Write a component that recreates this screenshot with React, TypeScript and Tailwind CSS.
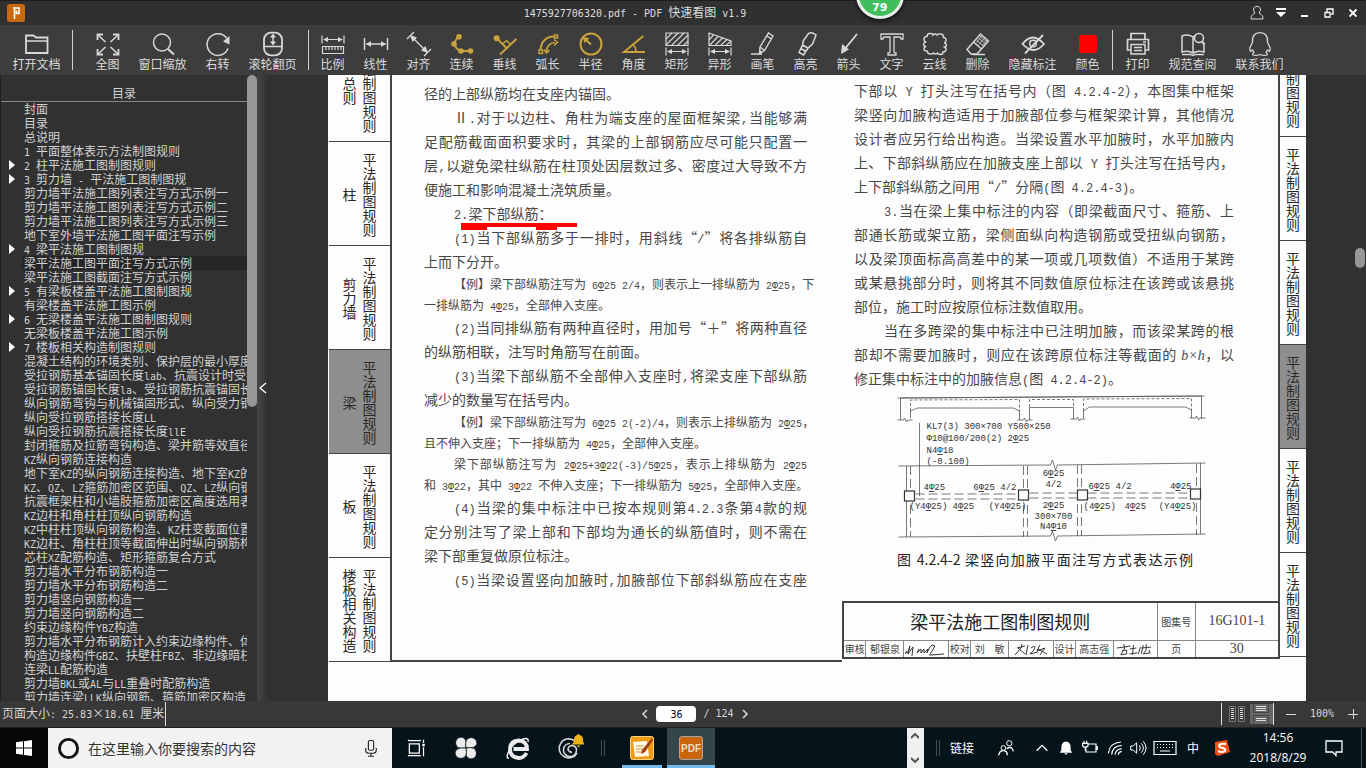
import React, { Fragment, ReactNode } from "react";

const UI = "font-['Noto_Sans_CJK_SC',sans-serif]";

/* Half-width runs are set in a fixed-width face so they take half a Chinese character each. */
function Mixed({ text }: { text: string }) {
  const parts = text.split(/([\x20-\x7e]+)/);
  return (
    <>
      {parts.map((p, i) =>
        i % 2 === 1 ? (
          <span key={i} className="font-['DejaVu_Sans_Mono',monospace] text-[10px]">
            {p}
          </span>
        ) : (
          <Fragment key={i}>{p}</Fragment>
        ),
      )}
    </>
  );
}

function Ico({ children, className = "size-6" }: { children: ReactNode; className?: string }) {
  return (
    <svg viewBox="0 0 24 24" className={`${className} shrink-0 overflow-visible`} fill="none" stroke="currentColor" strokeWidth="1.5" aria-hidden="true">
      {children}
    </svg>
  );
}

type Tool = { label: string; icon: ReactNode; wide?: boolean; gold?: boolean };

const openTool: Tool = {
  label: "打开文档",
  wide: true,
  icon: (
    <>
      <path d="M1 21V3.5h7.5l2.5 2h11.5V21z" strokeWidth="1.8" />
      <path d="M1 9h22" />
    </>
  ),
};

const viewTools: Tool[] = [
  {
    label: "全图",
    icon: (
      <>
        <path d="M1.500 8V2.500H7M22.500 8V2.500H17M1.500 17v5.500H7M22.500 17v5.500H17" strokeWidth="1.8" />
        <path d="M2 3l7.500 7M22 3l-7.500 7M2 22l7.500-7M22 22l-7.500-7" strokeWidth="1.6" />
      </>
    ),
  },
  {
    label: "窗口缩放",
    wide: true,
    icon: (
      <>
        <circle cx="11" cy="10.500" r="8.500" />
        <path d="M17 17l6 5.500" strokeWidth="2" />
      </>
    ),
  },
  {
    label: "右转",
    icon: (
      <>
        <path d="M22 16.500A10.800 10.800 0 1 1 20.500 6" />
        <path d="M23.500 4v8.500l-6.500-3z" fill="currentColor" stroke="none" />
      </>
    ),
  },
  {
    label: "滚轮翻页",
    wide: true,
    icon: (
      <>
        <rect x="3" y="0.700" width="18" height="22.600" rx="7" strokeWidth="1.800" />
        <path d="M3 14.500h18M12 4v7" />
        <path d="M12 1.500l3 4H9zM12 13.500l3-4H9z" fill="currentColor" stroke="none" />
      </>
    ),
  },
];

const dimension = (y: number) => (
  <>
    <path d={`M1 ${y - 4}v8M23 ${y - 4}v8M3 ${y}h18`} strokeWidth="1.2" />
    <path d={`M2 ${y}l5-2.500v5zM22 ${y}l-5-2.500v5z`} fill="currentColor" stroke="none" />
  </>
);

const markTools: Tool[] = [
  {
    label: "比例",
    icon: (
      <>
        {dimension(7.5)}
        <path d="M1.500 14.500h21v7h-21zM5 15v3M8 15v3M11 15v3M14 15v3M17 15v3M20 15v3" strokeWidth="1.200" />
      </>
    ),
  },
  {
    label: "线性",
    icon: (
      <>
        <path d="M0.500 6v12M23.500 6v12M3 12h18" />
        <path d="M1.500 12l5.500-2.800v5.600zM22.500 12l-5.500-2.800v5.600z" fill="currentColor" stroke="none" />
      </>
    ),
  },
  {
    label: "对齐",
    icon: (
      <>
        <path d="M0 7L7 0M17 24l7-7M4 4l16 16" strokeWidth="1.300" />
        <path d="M3 3l7 2.500-4.500 4.500zM21 21l-7-2.500 4.500-4.500z" fill="currentColor" stroke="none" />
      </>
    ),
  },
  {
    label: "连续",
    gold: true,
    icon: (
      <>
        <path d="M9 4.700Q4 9 4.500 12Q6 18 11 19h9.500" strokeWidth="2" />
        <g fill="currentColor" stroke="none">
          <circle cx="9" cy="4.700" r="2.800" />
          <circle cx="4" cy="12" r="2.800" />
          <circle cx="11" cy="19" r="2.800" />
          <circle cx="20.500" cy="19" r="2.800" />
        </g>
      </>
    ),
  },
  {
    label: "垂线",
    gold: true,
    icon: (
      <>
        <circle cx="3.700" cy="6.300" r="3" fill="currentColor" stroke="none" />
        <path d="M4 6.500l9.500 9.500M7 22.500L23.500 7" strokeWidth="2" />
        <path d="M9.500 12l4-3.500 4 4" />
      </>
    ),
  },
  {
    label: "弧长",
    gold: true,
    icon: (
      <>
        <path d="M18 4.500C10 4.500 4.700 10 4.700 18" strokeWidth="2" />
        <path d="M18.500 3h3v3h-3zM3 18h3.500v3.500H3z" />
        <path d="M19 10.500c-5 0-8.500 4-8.500 9M18 7.500l3.500 3-3.500 3M8 17.500l2.500 3.500 3-3" />
      </>
    ),
  },
  {
    label: "半径",
    gold: true,
    icon: (
      <>
        <circle cx="12" cy="12" r="10.500" strokeWidth="2" />
        <path d="M12 12.500L5.500 6.500" strokeWidth="2" />
        <path d="M3.500 5l7 1-5 5z" fill="currentColor" stroke="none" />
      </>
    ),
  },
  {
    label: "角度",
    gold: true,
    icon: (
      <>
        <path d="M21.300 4L2 20h21" strokeWidth="2" />
        <path d="M11 12.500q3.500 3 2.500 7.500" />
      </>
    ),
  },
  {
    label: "矩形",
    icon: (
      <>
        <path d="M1 1h22v12.500H1z" strokeWidth="1.2" />
        <path d="M1 7l6-6M1 13l12-12M6.500 13.500L19 1M12.500 13.500L23 3M18.500 13.500L23 9" strokeWidth="1.200" />
        {dimension(19.5)}
      </>
    ),
  },
  {
    label: "异形",
    icon: (
      <>
        <path d="M1 1l22 8v4.500H1z" strokeWidth="1.2" />
        <path d="M1 8l4.500-5M2 13l8-8.500M7.500 13l7-7M13 13l6-5.500M18.500 13l4-3.500" strokeWidth="1.200" />
        {dimension(19.5)}
      </>
    ),
  },
  {
    label: "画笔",
    icon: (
      <>
        <path d="M9 15L17.500 1l4.500 3-8.500 14.500-5 3zM16 4l4.500 3M9 15l4.500 3.500M0 22h11" strokeWidth="1.400" />
        <path d="M8.500 22v-4l3 2z" fill="currentColor" stroke="none" />
      </>
    ),
  },
  {
    label: "高亮",
    icon: (
      <path d="M9.500 8.500L14.500 1.500q3-2 7.500 1.500l-3.500 9-4.500 4-5.500-3zM8.500 13l-3.500 7.500 4.500 2.500 4.500-7M9.500 8.500l-1 4.500M7 16.500l5 3" strokeWidth="1.500" />
    ),
  },
  {
    label: "箭头",
    icon: (
      <>
        <path d="M20 2L7 18" strokeWidth="1.800" />
        <path d="M4 22l1-10 7 5.500z" fill="currentColor" stroke="none" />
      </>
    ),
  },
  {
    label: "文字",
    icon: <path d="M1 2h22v5h-2q0-2-2-2h-5v15q0 1 2 1v2H8v-2q2 0 2-1V5H5Q3 5 3 7H1z" strokeWidth="1.300" />,
  },
  {
    label: "云线",
    icon: (
      <path
        d="M4 4.500q0-3 3-3t3 1.500q2-2 4 0 1-1.500 4-1t2.500 3.500q3 .5 2.500 3t-2 2q2.500 1 2.500 2.500t-2 2q2 1 1.500 3t-3 2q0 2.500-2.500 2.500t-3-1.500q-2 2-4 0-1 1.500-3.500 1T4 19q-3 0-3-2t2-2.500q-2.500-.5-2.500-2t2-2.500Q.5 9 1 6.500t3-2z"
        strokeWidth="1.400"
      />
    ),
  },
  {
    label: "删除",
    icon: (
      <>
        <path d="M14.500 2l8 7L11 22H5l-4-4.500zM7.500 10l8 7M6 22.500h13" />
        <path d="M10.500 8l7.500 6.500M12.500 6l7.500 6M14 4l7 6M13 12.500l6-7M10.500 10.500l5.500-7M16 14l5-6" strokeWidth="0.8" />
      </>
    ),
  },
  {
    label: "隐藏标注",
    wide: true,
    icon: (
      <>
        <path d="M1.500 12q10-13 21.500 0-10 12-21.500 0z" strokeWidth="1.800" />
        <circle cx="12" cy="11.500" r="3.300" />
        <path d="M4 21.500L22 3" strokeWidth="1.800" />
      </>
    ),
  },
  { label: "颜色", icon: <rect x="3" y="3" width="18" height="18" rx="2" fill="#ff0000" stroke="none" /> },
];

const endTools: Tool[] = [
  {
    label: "打印",
    icon: (
      <>
        <path d="M5 7V1.500h14V7M5 18H1.500V7.500h21V18H19" strokeWidth="1.700" />
        <path d="M5 12.500h14v9.500H5zM8 15.500h8M8 18.500h8M17 10h3" />
      </>
    ),
  },
  {
    label: "规范查阅",
    wide: true,
    icon: (
      <>
        <path d="M12 5Q7 1.500 1 4v16q6-2 11 1 5-3 11-1V11M12 5v16M12 5q1-1 3-1.500M1 22.500h9l2 1 2-1h9" />
        <circle cx="18" cy="6" r="4.500" />
        <path d="M21 9.500l2.500 3" strokeWidth="2" />
      </>
    ),
  },
  {
    label: "联系我们",
    wide: true,
    icon: (
      <path d="M12 .7c-5 0-8 3-7.500 9.500L2 15.500q-.7 3 .5 4l2-1.500 1.500 2.500q-2 1.500-1 2.500 3 1 7-.5 4 1.500 7 .5 1-1-1-2.500l1.500-2.500 2 1.500q1.200-1 .5-4l-2.500-5.300C20 3.700 17 .7 12 .7z" strokeWidth="1.300" />
    ),
  },
];

function ToolButton({ tool }: { tool: Tool }) {
  return (
    <button type="button" className={`flex shrink-0 flex-col items-center ${tool.wide ? "w-[67px]" : "w-[43px]"}`}>
      <span className={tool.gold ? "text-[#c9a13d]" : "text-[#d8d8d8]"}>
        <Ico>{tool.icon}</Ico>
      </span>
      <span className="text-xs leading-4 whitespace-nowrap text-[#dadada]">{tool.label}</span>
    </button>
  );
}

const Sep = ({ className }: { className: string }) => <div className={`h-10 w-px shrink-0 bg-[#d0d0d0] ${className}`} />;

const outline: { t: string; open?: boolean; sel?: boolean }[] = [
  { t: "封面" },
  { t: "目录" },
  { t: "总说明" },
  { t: "1 平面整体表示方法制图规则" },
  { t: "2 柱平法施工图制图规则", open: true },
  { t: "3 剪力墙 - 平法施工图制图规", open: true },
  { t: "剪力墙平法施工图列表注写方式示例一" },
  { t: "剪力墙平法施工图列表注写方式示例二" },
  { t: "剪力墙平法施工图列表注写方式示例三" },
  { t: "地下室外墙平法施工图平面注写示例" },
  { t: "4 梁平法施工图制图规", open: true },
  { t: "梁平法施工图平面注写方式示例", sel: true },
  { t: "梁平法施工图截面注写方式示例" },
  { t: "5 有梁板楼盖平法施工图制图规", open: true },
  { t: "有梁楼盖平法施工图示例" },
  { t: "6 无梁楼盖平法施工图制图规则", open: true },
  { t: "无梁板楼盖平法施工图示例" },
  { t: "7 楼板相关构造制图规则", open: true },
  { t: "混凝土结构的环境类别、保护层的最小厚度" },
  { t: "受拉钢筋基本锚固长度lab、抗震设计时受拉" },
  { t: "受拉钢筋锚固长度la、受拉钢筋抗震锚固长度" },
  { t: "纵向钢筋弯钩与机械锚固形式、纵向受力钢筋" },
  { t: "纵向受拉钢筋搭接长度LL" },
  { t: "纵向受拉钢筋抗震搭接长度llE" },
  { t: "封闭箍筋及拉筋弯钩构造、梁并筋等效直径" },
  { t: "KZ纵向钢筋连接构造" },
  { t: "地下室KZ的纵向钢筋连接构造、地下室KZ的" },
  { t: "KZ、QZ、LZ箍筋加密区范围、QZ、LZ纵向钢筋" },
  { t: "抗震框架柱和小墙肢箍筋加密区高度选用表" },
  { t: "KZ边柱和角柱柱顶纵向钢筋构造" },
  { t: "KZ中柱柱顶纵向钢筋构造、KZ柱变截面位置" },
  { t: "KZ边柱、角柱柱顶等截面伸出时纵向钢筋构造" },
  { t: "芯柱XZ配筋构造、矩形箍筋复合方式" },
  { t: "剪力墙水平分布钢筋构造一" },
  { t: "剪力墙水平分布钢筋构造二" },
  { t: "剪力墙竖向钢筋构造一" },
  { t: "剪力墙竖向钢筋构造二" },
  { t: "约束边缘构件YBZ构造" },
  { t: "剪力墙水平分布钢筋计入约束边缘构件、体积" },
  { t: "构造边缘构件GBZ、扶壁柱FBZ、非边缘暗柱" },
  { t: "连梁LL配筋构造" },
  { t: "剪力墙BKL或AL与LL重叠时配筋构造" },
  { t: "剪力墙连梁LLK纵向钢筋、箍筋加密区构造" },
];

type LineProps = { text: string; indent?: boolean; small?: boolean; full?: boolean; children?: ReactNode };

/* One set line of the sheet. "Ф" stands for the ribbed-bar mark and is drawn on a short bar. */
function Line({ text, children, indent, small, full }: LineProps) {
  const parts = text.split(/(Ф| b×h|[\x20-\x7e]+)/);
  return (
    <div
      className={`relative whitespace-nowrap ${indent ? "pl-[30px]" : ""} ${small ? "h-[21px] text-xs leading-[21px]" : "h-6 text-sm leading-6"} ${full ? "text-justify [text-align-last:justify]" : ""}`}
    >
      {parts.map((p, i) => {
        if (i % 2 === 0) return <Fragment key={i}>{p}</Fragment>;
        if (p === " b×h") return <i key={i} className="font-['Liberation_Serif',serif] leading-none">{p}</i>;
        const face = small
          ? "font-['Liberation_Mono',monospace] text-[10px] leading-none"
          : "font-['Liberation_Mono',monospace] text-xs leading-none";
        if (p === "Ф")
          return (
            <span key={i} className={`${face} underline underline-offset-1`}>
              Φ
            </span>
          );
        return (
          <span key={i} className={face}>
            {p}
          </span>
        );
      })}
      {children}
    </div>
  );
}

const tabs = ["总则", "柱", "剪力墙", "梁", "板", "楼板相关构造"];

function ChapterTab({ name, active }: { name?: string; active: boolean }) {
  return (
    <div
      className={`flex h-[104px] shrink-0 items-center justify-center gap-[6px] border-b border-[#444] pt-[2px] text-sm leading-[14px] text-[#2a2a2a] ${active ? "bg-[#8e8e8e]" : ""}`}
    >
      {name && <span className="whitespace-nowrap [writing-mode:vertical-rl]">{name}</span>}
      <span className="whitespace-nowrap [writing-mode:vertical-rl]">平法制图规则</span>
    </div>
  );
}

function Bar({ x, y, children, anchor = "start" }: { x: number; y: number; children: ReactNode; anchor?: "start" | "middle" | "end" }) {
  return (
    <text x={x} y={y} textAnchor={anchor} stroke="none" fill="#333">
      {children}
    </text>
  );
}
const r = <tspan textDecoration="underline">Φ</tspan>;

function Figure() {
  return (
    <svg
      viewBox="842 391 435 158"
      className="h-[158px] w-full shrink-0 font-['Liberation_Mono','Noto_Sans_CJK_SC',monospace] text-[9px]"
      fill="none"
      stroke="#555"
      strokeWidth="0.8"
      role="img"
      aria-label="梁竖向加腋平面注写方式表达示例"
    >
      <path d="M900 420V398L1201 396V419" />
      <path d="M897 398L1204 396" />
      <path d="M910 418V411L917 408H1013L1019 411V420M1029 420V407.500H1073V419M1083 418V411L1089 407H1185L1191 410V418" />
      <path d="M910 411V400L1019 399.500V411M1029 407V399.500H1073V407M1083 411V399L1191 398.500V410" strokeDasharray="3 2" />
      <path d="M897 420h6l1-2 2 4 1-2h5M1017 420h6l1-2 2 4 1-2h5M1070 419h6l1-2 2 4 1-2h5M1189 418h6l1-2 2 4 1-2h6" />
      <path d="M919 423v73" />
      <path d="M898 466L1050 465l2-5 3 10 2-5L1205 463M898 537L1050 536l2-5 3 10 2-5L1205 534" />
      <path d="M906 466v71M1200 463v71" />
      <path d="M910 466v71M1023 466v71M1027 466v71M1077 465v71M1081 465v71M1196 464v71" strokeDasharray="9 4" />
      <path d="M915 494H1018M915 499H1018M1029 493H1077M1029 498H1077M1087 493H1190M1087 498H1190" strokeDasharray="9 4" />
      <g fill="#fdfdfd" stroke="#333" strokeWidth="1.200">
        <rect x="904" y="491" width="10" height="10" />
        <rect x="1018" y="490" width="10" height="10" />
        <rect x="1077" y="490" width="10" height="10" />
        <rect x="1190" y="489" width="10" height="10" />
      </g>
      <Bar x={926} y={429}>KL7(3) 300×700 Y500×250</Bar>
      <Bar x={926} y={441}>Φ10@100/200(2) 2{r}25</Bar>
      <Bar x={926} y={453}>N4{r}18</Bar>
      <Bar x={926} y={464}>(-0.100)</Bar>
      <Bar x={923} y={490}>4{r}25</Bar>
      <Bar x={1016} y={490} anchor="end">6{r}25 4/2</Bar>
      <Bar x={909} y={509}>(Y4{r}25)</Bar>
      <Bar x={952} y={509}>4{r}25</Bar>
      <Bar x={1026} y={509} anchor="end">(Y4{r}25)</Bar>
      <Bar x={1053} y={476} anchor="middle">6{r}25</Bar>
      <Bar x={1053} y={487} anchor="middle">4/2</Bar>
      <Bar x={1053} y={508} anchor="middle">2{r}25</Bar>
      <Bar x={1053} y={519} anchor="middle">300×700</Bar>
      <Bar x={1053} y={529} anchor="middle">N4{r}10</Bar>
      <Bar x={1088} y={489}>6{r}25 4/2</Bar>
      <Bar x={1191} y={489} anchor="end">4{r}25</Bar>
      <Bar x={1083} y={509}>(4{r}25)</Bar>
      <Bar x={1124} y={509}>4{r}25</Bar>
      <Bar x={1196} y={509} anchor="end">(Y4{r}25)</Bar>
    </svg>
  );
}

const Sign = ({ d }: { d: string }) => (
  <svg viewBox="0 0 44 14" className="h-[14px] w-full overflow-visible" fill="none" stroke="#333" strokeWidth="1" aria-hidden="true">
    <path d={d} />
  </svg>
);

function TitleBlock() {
  return (
    <table className="mt-auto w-full shrink-0 table-fixed border-collapse border-t-2 border-l-2 border-[#444] text-[#444]">
      <colgroup>
        {[23, 38, 45, 22, 38, 45, 22, 38, 44, 38, 83].map((w, i) => (
          <col key={i} style={{ width: `${(w / 436) * 100}%` }} />
        ))}
      </colgroup>
      <tbody>
        <tr className="h-[38px]">
          <th colSpan={9} className="border border-[#888] border-t-[#444] border-l-[#444] p-0 text-lg leading-6 font-normal text-[#222]">
            梁平法施工图制图规则
          </th>
          <td className="border border-[#888] border-t-[#444] p-0 text-center text-[10px]">图集号</td>
          <td className="border border-[#888] border-t-[#444] border-r-0 p-0 text-center font-['Liberation_Serif',serif] text-sm">16G101-1</td>
        </tr>
        <tr className="h-[17px] text-center text-[10px] leading-[14px] whitespace-nowrap [&>td]:border-x [&>td]:border-[#888] [&>td]:p-0">
          <td>审核</td>
          <td>郁银泉</td>
          <td>
            <Sign d="M3 9q-4 4 1 1l2-6-2 8 5-7-1 9M15 7l-2 4 4-4v4l3-4v4l4-4-1 4 3-6 2-2 3 1-4 7q-3 3 0 2l13-1" />
          </td>
          <td>校对</td>
          <td>刘　敏</td>
          <td>
            <Sign d="M8 6l8-2M13 2l-1 4-6 7M9 6l7 6M19 3l-2 10M22 6q6-4 3 2l-4 4 8-2M31 3l-3 6 8-3-5 7M29 7l9 5" />
          </td>
          <td>设计</td>
          <td>高志强</td>
          <td>
            <Sign d="M3 6l14-2M10 2l1 4-4 7 6-1V8l-5 1M20 3l-1 10M16 7l7-1M16 12l8-1M27 5l-2 7M30 3l-2 9M28 6l10-1M33 2v6l-3 4 7-1-1-3" />
          </td>
          <td>页</td>
          <td className="border-r-0! font-['Liberation_Serif',serif] text-sm leading-[14px]">30</td>
        </tr>
      </tbody>
    </table>
  );
}

function PdfPage() {
  return (
    <article className="ml-[60px] flex min-w-0 flex-1 items-stretch overflow-hidden bg-[#fdfdfd] pb-[39px] pl-px">
      <div className="flex w-[61px] shrink-0 flex-col justify-end overflow-hidden">
        {tabs.map((t) => (
          <ChapterTab key={t} name={t} active={t === "梁"} />
        ))}
      </div>
      <div className="grid min-w-0 flex-1 grid-cols-[minmax(0,452fr)_minmax(0,438fr)]">
        <div className="flex flex-col border-b-2 border-l-2 border-[#444] pt-[6px] pr-[35px] pl-8 text-[#484848]">
          <Line text="径的上部纵筋均在支座内锚固。" />
          <Line indent full text="Ⅱ.对于以边柱、角柱为端支座的屋面框架梁,当能够满" />
          <Line full text="足配筋截面面积要求时，其梁的上部钢筋应尽可能只配置一" />
          <Line full text="层,以避免梁柱纵筋在柱顶处因层数过多、密度过大导致不方" />
          <Line text="便施工和影响混凝土浇筑质量。" />
          <Line indent text="2.梁下部纵筋：">
            <svg viewBox="0 0 116 7" className="absolute top-[22px] left-[37px] h-[7px] w-[116px]" fill="#ff0000" aria-hidden="true">
              <path d="M0 0h116v4H96v3H75V4H26v3H0z" />
            </svg>
          </Line>
          <Line indent full text="(1)当下部纵筋多于一排时，用斜线“/”将各排纵筋自" />
          <Line text="上而下分开。" />
          <Line indent small full text="【例】梁下部纵筋注写为 6Ф25 2/4，则表示上一排纵筋为 2Ф25，下" />
          <Line small text="一排纵筋为 4Ф25，全部伸入支座。" />
          <Line indent full text="(2)当同排纵筋有两种直径时，用加号“＋”将两种直径" />
          <Line text="的纵筋相联，注写时角筋写在前面。" />
          <Line indent full text="(3)当梁下部纵筋不全部伸入支座时,将梁支座下部纵筋" />
          <Line text="减少的数量写在括号内。" />
          <Line indent small full text="【例】梁下部纵筋注写为 6Ф25 2(-2)/4，则表示上排纵筋为 2Ф25，" />
          <Line small text="且不伸入支座；下一排纵筋为 4Ф25，全部伸入支座。" />
          <Line indent small full text="梁下部纵筋注写为 2Ф25+3Ф22(-3)/5Ф25，表示上排纵筋为 2Ф25" />
          <Line small full text="和 3Ф22，其中 3Ф22 不伸入支座；下一排纵筋为 5Ф25，全部伸入支座。" />
          <Line indent full text="(4)当梁的集中标注中已按本规则第4.2.3条第4款的规" />
          <Line full text="定分别注写了梁上部和下部均为通长的纵筋值时，则不需在" />
          <Line text="梁下部重复做原位标注。" />
          <Line indent full text="(5)当梁设置竖向加腋时,加腋部位下部斜纵筋应在支座" />
        </div>
        <div className="mb-[3px] flex flex-col border-r-2 border-b-2 border-[#444] pt-[3px]">
          <div className="pr-[44px] pb-px pl-3 text-[#484848]">
            <Line full text="下部以 Y 打头注写在括号内（图 4.2.4-2），本图集中框架" />
            <Line full text="梁竖向加腋构造适用于加腋部位参与框架梁计算，其他情况" />
            <Line full text="设计者应另行给出构造。当梁设置水平加腋时，水平加腋内" />
            <Line full text="上、下部斜纵筋应在加腋支座上部以 Y 打头注写在括号内，" />
            <Line text="上下部斜纵筋之间用“/”分隔(图 4.2.4-3)。" />
            <Line indent full text="3.当在梁上集中标注的内容（即梁截面尺寸、箍筋、上" />
            <Line full text="部通长筋或架立筋，梁侧面纵向构造钢筋或受扭纵向钢筋，" />
            <Line full text="以及梁顶面标高高差中的某一项或几项数值）不适用于某跨" />
            <Line full text="或某悬挑部分时，则将其不同数值原位标注在该跨或该悬挑" />
            <Line text="部位，施工时应按原位标注数值取用。" />
            <Line indent full text="当在多跨梁的集中标注中已注明加腋，而该梁某跨的根" />
            <Line full text="部却不需要加腋时，则应在该跨原位标注等截面的 b×h，以" />
            <Line text="修正集中标注中的加腋信息(图 4.2.4-2)。" />
          </div>
          <Figure />
          <p className="ml-[55px] w-[296px] text-justify text-sm leading-5 whitespace-nowrap text-[#222] [text-align-last:justify]">
            图 4.2.4-2 梁竖向加腋平面注写方式表达示例
          </p>
          <TitleBlock />
        </div>
      </div>
      <div className="mb-[5px] flex w-[26px] shrink-0 flex-col justify-end overflow-hidden">
        {tabs.map((t) => (
          <ChapterTab key={t} active={t === "梁"} />
        ))}
      </div>
    </article>
  );
}

function TitleBar() {
  return (
    <header className="relative flex h-[25px] shrink-0 items-center border-t border-[#1c1c1c] bg-[#303030] pr-px pl-[7px] text-[#ddd]">
      <div className="flex flex-1">
        <svg viewBox="0 0 18 18" className="size-[18px]" aria-hidden="true">
          <rect width="18" height="18" rx="3" fill="#c96a10" />
          <path d="M6 4h3M7.500 4v11M9 4h3v5.500H9.500v-3" fill="none" stroke="#fff" strokeWidth="1.600" />
        </svg>
      </div>
      <h1 className="mr-[102px] text-xs leading-4 font-normal whitespace-pre">
        <Mixed text="1475927706320.pdf - PDF 快速看图 v1.9" />
      </h1>
      <div className="flex flex-1 items-center justify-end">
        <button type="button" aria-label="用户" className="flex w-6 justify-center">
          <Ico className="size-4">
            <path d="M12 2c-4 0-6 3-5 6.500.5 1.500 1 2.500 2 3.500C4 15 3 17 3 21h18c0-4-1-6-6-9 1-1 1.500-2 2-3.500C18 5 16 2 12 2z" />
          </Ico>
        </button>
        <button type="button" aria-label="菜单" className="flex w-6 justify-center text-white">
          <svg viewBox="0 0 10 10" className="size-[10px]" fill="currentColor" aria-hidden="true">
            <path d="M0 0h10v2H0zM0 4h10L5 9z" />
          </svg>
        </button>
        <button type="button" aria-label="最小化" className="flex w-6 justify-center text-white">
          <svg viewBox="0 0 10 10" className="size-[10px]" fill="currentColor" aria-hidden="true">
            <path d="M1 7h7v2H1z" />
          </svg>
        </button>
        <button type="button" aria-label="还原" className="flex w-6 justify-center text-white">
          <svg viewBox="0 0 10 10" className="size-[10px]" fill="none" stroke="currentColor" strokeWidth="1.300" aria-hidden="true">
            <path d="M3 4V1h6v5H7M1 4.500h5V9H1z" />
          </svg>
        </button>
        <button type="button" aria-label="关闭" className="flex w-6 justify-center text-white">
          <svg viewBox="0 0 10 10" className="size-[10px]" fill="none" stroke="currentColor" strokeWidth="1.800" aria-hidden="true">
            <path d="M1.500 1.500l7 7M8.500 1.500l-7 7" />
          </svg>
        </button>
      </div>
      <div className="absolute -top-[30px] left-[64.400%] z-10 flex size-12 -translate-x-1/2 items-end justify-center rounded-full border-[3px] border-[#e4efe6] bg-[#3fbf5c] shadow-[0_2px_5px_#111]">
        <span className="font-['DejaVu_Sans',sans-serif] text-[11px] leading-4 font-bold text-white">79</span>
      </div>
    </header>
  );
}

function StatusBar() {
  return (
    <footer className="flex h-[27px] shrink-0 items-center border-b border-[#222] bg-[#383838] text-xs text-[#d6d6d6]">
      <div className="flex flex-1 items-center">
        <span className="border-r border-[#ddd] pr-px pl-[2px] leading-[22px] whitespace-pre">
          <Mixed text="页面大小: 25.83" />
          <span className="inline-block w-3 text-center">×</span>
          <Mixed text="18.61 厘米" />
        </span>
      </div>
      <nav className="ml-[32px] flex items-center gap-[7px]" aria-label="翻页">
        <button type="button" aria-label="上一页" className="flex w-2">
          <svg viewBox="0 0 8 10" className="h-[10px] w-2" fill="none" stroke="currentColor" strokeWidth="1.600">
            <path d="M6 1L2 5l4 4" />
          </svg>
        </button>
        <input
          aria-label="页码"
          defaultValue="36"
          className="h-4 w-10 rounded-[4px] bg-white text-center font-['DejaVu_Sans_Mono',monospace] text-[10px] text-black"
        />
        <span className="font-['DejaVu_Sans_Mono',monospace] text-[10px]">/ 124</span>
        <button type="button" aria-label="下一页" className="flex w-2">
          <svg viewBox="0 0 8 10" className="h-[10px] w-2" fill="none" stroke="currentColor" strokeWidth="1.600">
            <path d="M2 1l4 4-4 4" />
          </svg>
        </button>
      </nav>
      <div className="flex flex-1 items-center justify-end pr-2">
        <div className="flex h-[22px] items-center gap-1 border-x border-[#ddd] pl-[6px]">
          <button type="button" aria-label="双页" className="flex w-[18px] justify-center">
            <svg viewBox="0 0 16 16" className="size-4" fill="none" stroke="#777" aria-hidden="true">
              <path d="M.5.5h6v15h-6zM9.500.5h6v15h-6z" />
              <path d="M3.500 2v12M12.500 2v12" stroke="#ddd" strokeWidth="3" strokeDasharray="1 1" />
            </svg>
          </button>
          <button type="button" aria-label="连续页" className="flex w-[23px] justify-center bg-[#666]">
            <svg viewBox="0 0 16 20" className="h-5 w-4" fill="none" stroke="#444" aria-hidden="true">
              <path d="M.5 0v8.500h15V0M.5 20v-8.500h15V20" />
              <path d="M3 2.500h10M3 4.500h10M3 6.500h10M3 14.500h10M3 16.500h10" stroke="#ddd" />
            </svg>
          </button>
        </div>
        <button type="button" aria-label="缩小" className="ml-[12px] flex w-[10px]">
          <svg viewBox="0 0 10 10" className="size-[10px]" stroke="currentColor">
            <path d="M0 5.500h10" />
          </svg>
        </button>
        <span className="mx-[14px] font-['DejaVu_Sans_Mono',monospace] text-[10px]">100%</span>
        <button type="button" aria-label="放大" className="flex w-[10px]">
          <svg viewBox="0 0 10 10" className="size-[10px]" stroke="currentColor">
            <path d="M0 5.500h10M5.500 0v10" />
          </svg>
        </button>
      </div>
    </footer>
  );
}

function Taskbar() {
  return (
    <div className="flex h-10 shrink-0 items-stretch bg-[#04141a] text-white">
      <button type="button" aria-label="开始" className="flex w-12 shrink-0 items-center justify-center bg-[#060606]">
        <svg viewBox="0 0 16 16" className="size-4" fill="#fff" aria-hidden="true">
          <path d="M0 2.300L7 1.300V7.600H0zM8 1.200L16 0V7.600H8zM0 8.500H7V14.800L0 13.800zM8 8.500h8V16L8 14.900z" />
        </svg>
      </button>
      <label className="flex w-[344px] items-center bg-[#f2f2f2] pr-3 pl-[9px] text-[#222]">
        <svg viewBox="0 0 24 24" className="size-[23px] shrink-0" fill="none" stroke="#111" strokeWidth="3" aria-hidden="true">
          <circle cx="12" cy="12" r="9.500" />
        </svg>
        <input
          type="search"
          aria-label="搜索"
          placeholder="在这里输入你要搜索的内容"
          className="ml-2 min-w-0 flex-1 bg-transparent text-sm outline-none placeholder:text-[#333]"
        />
        <Ico className="size-[18px]">
          <rect x="8.500" y="2" width="7" height="13" rx="2" />
          <path d="M5 12v3q0 4 4 4h6q4 0 4-4v-3M12 19v4M8 23h8" />
        </Ico>
      </label>
      <button type="button" aria-label="任务视图" className="flex w-12 items-center justify-center">
        <Ico className="size-5">
          <path d="M4 7h12v11H4zM3 3.500V2M3 3h14V2M3 22v-1h14v1M21 2v4M21 11v11" />
          <path d="M19.500 7h3v3h-3z" fill="currentColor" stroke="none" />
        </Ico>
      </button>
      <button type="button" aria-label="风扇" className="flex w-[52px] items-center justify-center">
        <svg viewBox="0 0 24 24" className="size-6" fill="#ececec" stroke="#04141a" strokeWidth="0.900" aria-hidden="true">
          <path d="M12 12Q2 14 1.500 7 2 1 8 1q6 2 4 11z" />
          <path d="M12 12Q10 2 17 1.500q6 .5 6 6.500-2 5-11 4z" />
          <path d="M12 12q10-2 10.500 5 0 6-6.500 6-6-2-4-11z" />
          <path d="M12 12q2 10-5 10.500-6-.5-6-6.500 2-5 11-4z" />
        </svg>
      </button>
      <button type="button" aria-label="浏览器" className="flex w-[52px] items-center justify-center">
        <svg viewBox="0 0 24 24" className="size-6" fill="none" stroke="#ececec" aria-hidden="true">
          <path d="M20.500 17q-2.500 5-8 5-8.500-1-8.500-9t8.500-8.500q8.500.5 8.500 8.500H7.500" strokeWidth="3.800" />
          <path d="M3 22Q0 23 2 17 6 7 17 3q6-2 5 3" strokeWidth="1.500" />
        </svg>
      </button>
      <button type="button" aria-label="助手" className="flex w-[52px] items-center justify-center">
        <svg viewBox="0 0 28 28" className="size-7" fill="none" stroke="#d8d8d8" strokeWidth="1.600" aria-hidden="true">
          <path d="M18 6.500A9.500 9.500 0 1 0 21 19M14 9.500a6.500 6.500 0 1 0 6 9q2-5-3-7-5 0-5 4 1 3 4 2.500" />
          <path d="M15 10.500q3-1 3-5 0-4 3.500-4.500Q21.500 0 22.500 0T23.500 1Q27 1.500 27 5.500q0 4 2 5zM20.500 11.500h4l-2 2z" fill="#eab31c" stroke="none" />
        </svg>
      </button>
      <div className="mx-[5px] my-3 w-1 border-x border-[#3e4c52]" />
      <button type="button" aria-label="笔记" className="ml-3 flex w-10 items-center justify-center border-b-[3px] border-[#76b9ed] pt-[3px]">
        <svg viewBox="0 0 24 24" className="size-6" aria-hidden="true">
          <rect x=".5" y=".5" width="23" height="23" rx="2" fill="#f19a16" stroke="#fbd27d" />
          <path d="M3 6l14-1 2 15-14 1z" fill="#fffbe8" />
          <path d="M6 10h8M6 13h7M6 16h6" stroke="#c99a45" />
          <path d="M22 2L12 14l-1 4 4-2 8-12z" fill="#a33a12" />
        </svg>
      </button>
      <button type="button" aria-label="PDF 快速看图" className="ml-[5px] flex w-12 items-center justify-center border-b-[3px] border-[#76b9ed] bg-[#35454c] pt-[3px]">
        <span className="flex size-6 items-center justify-center rounded-[3px] border border-[#a5a5a5] bg-[#c96408] font-['Liberation_Sans',sans-serif] text-[10px] font-bold text-[#f4dcc0]">PDF</span>
      </button>
      <div className="ml-auto flex items-stretch">
        <div className="flex w-[17px] flex-col items-center justify-between bg-[#f0f0f0] py-[5px] text-[#555]">
          <svg viewBox="0 0 8 6" className="h-[6px] w-2" fill="none" stroke="currentColor" strokeWidth="2">
            <path d="M0 5l4-4 4 4" />
          </svg>
          <svg viewBox="0 0 8 6" className="h-[6px] w-2" fill="none" stroke="currentColor" strokeWidth="2">
            <path d="M0 1l4 4 4-4" />
          </svg>
        </div>
        <div className="my-3 ml-3 w-1 border-x border-[#3e4c52]" />
        <span className="ml-[10px] self-center text-xs">链接</span>
        <div className="ml-[14px] flex items-center text-white">
          <span className="flex w-9 justify-center">
            <Ico className="size-4">
              <circle cx="8" cy="12" r="3.500" />
              <circle cx="17" cy="5" r="4" />
              <path d="M1 23q1-7 7-7t6 7M13 13q8-5 10 4" strokeWidth="2" />
            </Ico>
          </span>
          <span className="flex w-9 justify-center">
            <Ico className="size-4">
              <path d="M4 16l8-8 8 8" strokeWidth="2" />
            </Ico>
          </span>
          <span className="flex w-3 justify-center">
            <Ico className="size-[14px]">
              <path d="M12 1q8 1 8 10v5l2 3v1H2v-1l2-3v-5q0-9 8-10zM9 21h6l-3 3z" fill="currentColor" stroke="none" />
            </Ico>
          </span>
          <span className="ml-[10px] flex w-4 justify-center">
            <Ico className="size-4">
              <path d="M9 6h12v12H6v-5M21 10h2v4h-2M3 1v4M7 1v4M1 5h8v4q-4 4-8 0zM5 11v5" strokeWidth="1.800" />
            </Ico>
          </span>
          <span className="ml-[9px] flex w-4 justify-center">
            <Ico className="size-4">
              <path d="M2 20Q4 4 21 3M7 22Q8 9 22 8M12 22q1-8 10-9M17 22q0-4 5-5" strokeWidth="1.700" />
            </Ico>
          </span>
          <span className="ml-[7px] flex w-4 justify-center">
            <Ico className="size-4">
              <path d="M1 9h4l5-5v16l-5-5H1zM14 8q3 4 0 8M17 5q6 7 0 14M20 2q8 10 0 20" strokeWidth="1.500" />
            </Ico>
          </span>
          <span className="ml-[7px] flex w-6 justify-center">
            <svg viewBox="0 0 24 14" className="h-[14px] w-6" fill="none" stroke="currentColor" aria-hidden="true">
              <path d="M1 .5h22v13H1z" strokeWidth="1.200" />
              <path d="M4 3.500h16M4 6.500h16" strokeDasharray="1 2" />
              <path d="M7 10h10" />
            </svg>
          </span>
          <span className="ml-[10px] text-xs">中</span>
          <svg viewBox="0 0 16 16" className="ml-[15px] size-4" aria-hidden="true">
            <path d="M1 2l12-2 3 12-12 4-3-2z" fill="#f04f18" />
            <path d="M12 4q-7-1-7 2 1 2 4 2 3 1 2 3-3 2-7 0" fill="none" stroke="#fff" strokeWidth="2" />
          </svg>
        </div>
        <time className="ml-[18px] flex w-[60px] flex-col items-center justify-center font-['Open_Sans',sans-serif] text-xs leading-5">
          <span>14:56</span>
          <span>2018/8/29</span>
        </time>
        <button type="button" aria-label="通知" className="ml-4 flex w-5 items-center justify-center">
          <svg viewBox="0 0 18 18" className="size-[18px]" fill="none" stroke="currentColor" strokeWidth="1.300">
            <path d="M1 2h16v11h-6v3.500L7.500 13H1z" />
          </svg>
        </button>
        <div className="mr-1 ml-[17px] w-px bg-[#555]" />
      </div>
    </div>
  );
}

export default function App() {
  return (
    <div className={`flex h-screen flex-col overflow-hidden bg-[#313131] ${UI}`}>
      <TitleBar />
      <div role="toolbar" aria-label="工具" className="flex h-[50px] shrink-0 items-start bg-[#3d3d3d] pt-[7px] pl-[3px]">
        <ToolButton tool={openTool} />
        <Sep className="-mt-[2px] mr-[13px] ml-[2px]" />
        {viewTools.map((t) => (
          <ToolButton key={t.label} tool={t} />
        ))}
        <Sep className="-mt-[2px] mr-[2px] ml-[2px]" />
        {markTools.map((t) => (
          <ToolButton key={t.label} tool={t} />
        ))}
        <Sep className="-mt-[2px] mr-[3px] ml-[3px]" />
        {endTools.map((t) => (
          <ToolButton key={t.label} tool={t} />
        ))}
      </div>
      <div className="flex min-h-0 flex-1">
        <aside className="flex w-[247px] shrink-0 flex-col overflow-hidden border-l border-[#222] text-[#d2d2d2]">
          <h2 className="shrink-0 border-b border-[#888] pt-[10px] text-center text-xs leading-4 font-normal">目录</h2>
          <ul>
            {outline.map((o) => (
              <li key={o.t} className="flex h-[14px] items-center">
                <span className="flex w-[21px] shrink-0 justify-center">
                  {o.open && (
                    <svg viewBox="0 0 6 10" className="h-[10px] w-[6px]" fill="#fff" aria-hidden="true">
                      <path d="M0 0l6 5-6 5z" />
                    </svg>
                  )}
                </span>
                <button
                  type="button"
                  className={`h-[14px] min-w-0 flex-1 pl-[2px] text-left text-xs leading-[14px] whitespace-nowrap ${o.sel ? "bg-[#262626]" : ""}`}
                >
                  <Mixed text={o.t} />
                </button>
              </li>
            ))}
          </ul>
        </aside>
        <div className="w-[10px] shrink-0">
          <div className="h-[332px] rounded-full bg-[#979797]" />
        </div>
        <button
          type="button"
          aria-label="收起目录"
          className="flex w-[11px] shrink-0 items-center justify-center bg-linear-to-r from-[#474747] to-[#313131] text-white"
        >
          <svg viewBox="0 0 8 12" className="h-3 w-2" fill="none" stroke="currentColor" strokeWidth="1.300">
            <path d="M7 1L1 6l6 5" />
          </svg>
        </button>
        <PdfPage />
        <div className="ml-[49px] w-[10px] shrink-0">
          <div className="mt-[173px] mr-px h-5 w-[10px] rounded-full bg-[#979797]" />
        </div>
        <div className="w-px shrink-0" />
      </div>
      <StatusBar />
      <Taskbar />
    </div>
  );
}
